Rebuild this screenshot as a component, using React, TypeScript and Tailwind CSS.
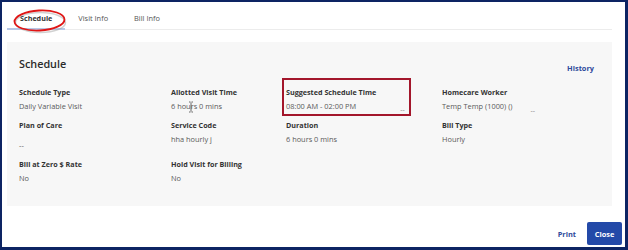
import React from "react";

const Label = ({ children }: { children: React.ReactNode }) => (
  <div className="text-[7.2px] leading-[10px] font-bold text-[#333]">{children}</div>
);

const Value = ({ children, className = "" }: { children: React.ReactNode; className?: string }) => (
  <div className={`mt-[4px] text-[7.4px] leading-[10px] text-[#5a5a5a] ${className}`}>{children}</div>
);

const Cell = ({ children }: { children: React.ReactNode }) => (
  <div className="flex flex-col pb-[9px]">{children}</div>
);

export default function App() {
  return (
    <div className="relative w-[628px] h-[250px] bg-white border-l-2 border-t-2 border-r-[3px] border-b-[3px] border-[#0d2463] font-['Open_Sans',sans-serif] flex flex-col overflow-hidden">
      {/* Tabs */}
      <div className="ml-[5px] mr-[13px] flex border-b border-[#ececec]">
        <div className="px-[13px] pt-[11px] pb-[5px] border-b-2 border-[#b7c7e6] -mb-px text-[7.2px] leading-[10px] font-bold text-[#333]">
          Schedule
        </div>
        <div className="px-[13px] pt-[11px] pb-[6px] text-[7.4px] leading-[10px] text-[#555]">Visit Info</div>
        <div className="px-[13px] pt-[11px] pb-[6px] text-[7.4px] leading-[10px] text-[#555]">Bill Info</div>
      </div>

      {/* Panel */}
      <div className="relative ml-[5px] mr-[13px] mt-[12px] h-[164px] bg-[#f7f7f7] pl-[12px] pr-[18px] pt-[15px]">
        <div className="flex items-start justify-between">
          <div className="text-[10.8px] leading-[14px] font-semibold text-[#2b2b2b]">Schedule</div>
          <div className="mt-[6px] text-[7.4px] leading-[10px] font-bold text-[#2f4a9c]">History</div>
        </div>
        <div className="mt-[14px] grid grid-cols-[152px_115px_156px_1fr]">
          <Cell>
            <Label>Schedule Type</Label>
            <Value>Daily Variable Visit</Value>
          </Cell>
          <Cell>
            <Label>Allotted Visit Time</Label>
            <Value>6 hours 0 mins</Value>
          </Cell>
          <Cell>
            <Label>Suggested Schedule Time</Label>
            <Value className="flex">
              <span>08:00 AM - 02:00 PM</span>
              <span className="ml-[44px] mt-[4px] -mb-[4px] text-[7px] text-[#888]">--</span>
            </Value>
          </Cell>
          <Cell>
            <Label>Homecare Worker</Label>
            <Value className="flex">
              <span>Temp Temp (1000) ()</span>
              <span className="ml-[18px] mt-[5px] -mb-[5px] text-[7px] text-[#888]">--</span>
            </Value>
          </Cell>

          <Cell>
            <Label>Plan of Care</Label>
            <Value className="pt-[6px]">--</Value>
          </Cell>
          <Cell>
            <Label>Service Code</Label>
            <Value>hha hourly j</Value>
          </Cell>
          <Cell>
            <Label>Duration</Label>
            <Value>6 hours 0 mins</Value>
          </Cell>
          <Cell>
            <Label>Bill Type</Label>
            <Value>Hourly</Value>
          </Cell>

          <Cell>
            <Label>Bill at Zero $ Rate</Label>
            <Value>No</Value>
          </Cell>
          <Cell>
            <Label>Hold Visit for Billing</Label>
            <Value>No</Value>
          </Cell>
        </div>

        {/* red annotation box */}
        <div className="absolute left-[275px] top-[36px] w-[129px] h-[38px] border-2 border-[#a3162b] pointer-events-none" />
      </div>

      {/* Footer */}
      <div className="mt-[16px] flex items-center justify-end pr-[3px]">
        <span className="text-[7.4px] leading-[10px] font-bold text-[#2f4a9c] mr-[11px]">Print</span>
        <button className="w-[35px] h-[23px] rounded-[2px] bg-[#2349a8] text-white text-[7.4px] leading-[10px] font-bold">
          Close
        </button>
      </div>

      {/* red ellipse annotation */}
      <svg className="absolute left-0 top-0 pointer-events-none" width="80" height="40" viewBox="0 0 80 40">
        <ellipse cx="38.5" cy="20.5" rx="25" ry="10" fill="none" stroke="#999" strokeWidth="1.5" opacity="0.45" />
        <ellipse cx="37.5" cy="18.5" rx="25" ry="10" fill="none" stroke="#e01515" strokeWidth="1.8" transform="rotate(-3 37.5 18.5)" />
      </svg>

      {/* text cursor */}
      <svg className="absolute left-[186px] top-[99px] pointer-events-none" width="6" height="12" viewBox="0 0 6 12">
        <path d="M1 1h1.5M3.5 1H5M3 1.5v9M1 11h1.5M3.5 11H5" stroke="#444" strokeWidth="0.8" fill="none" />
      </svg>
    </div>
  );
}
